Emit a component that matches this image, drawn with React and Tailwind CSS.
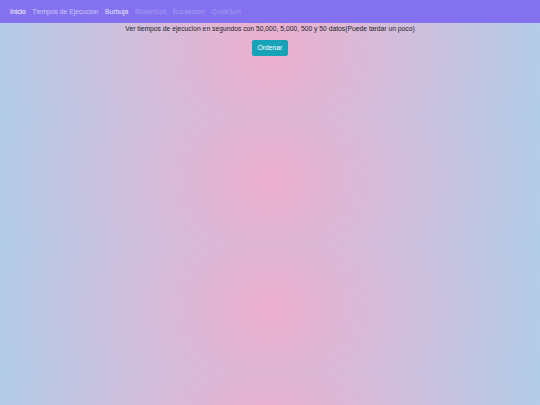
export default function App() {
  const font = { fontFamily: '"Liberation Sans", Arial, sans-serif' };
  return (
    <div
      className="min-h-screen w-full bg-[radial-gradient(circle,#eeafcf_0%,#b2cde9_100%)] bg-[length:100%_128px] bg-[position:0_-12px] bg-repeat text-[#212529]"
      style={font}
    >
      <nav className="flex h-[23px] items-center bg-[#8371ef] px-[10px] text-[6.75px] leading-[10px]">
        <ul className="flex items-center gap-[6.5px]">
          <li className="text-white">Inicio</li>
          <li className="text-white/60">Tiempos de Ejecucion</li>
          <li className="text-white/80">Burbuja</li>
          <li className="text-white/30">ShakeSort</li>
          <li className="text-white/30">Bucketsort</li>
          <li className="text-white/30">QuickSort</li>
        </ul>
      </nav>
      <div className="flex flex-col items-center">
        <p className="mt-[1px] text-[6.75px] leading-[10px]">
          Ver tiempos de ejecucion en segundos con 50,000, 5,000, 500 y 50 datos(Puede tardar un poco)
        </p>
        <button className="mt-[6px] h-[16px] rounded-[2px] border border-[#17a2b8] bg-[#17a2b8] px-[5px] text-[6.75px] leading-[10px] text-white">
          Ordenar
        </button>
      </div>
    </div>
  );
}
